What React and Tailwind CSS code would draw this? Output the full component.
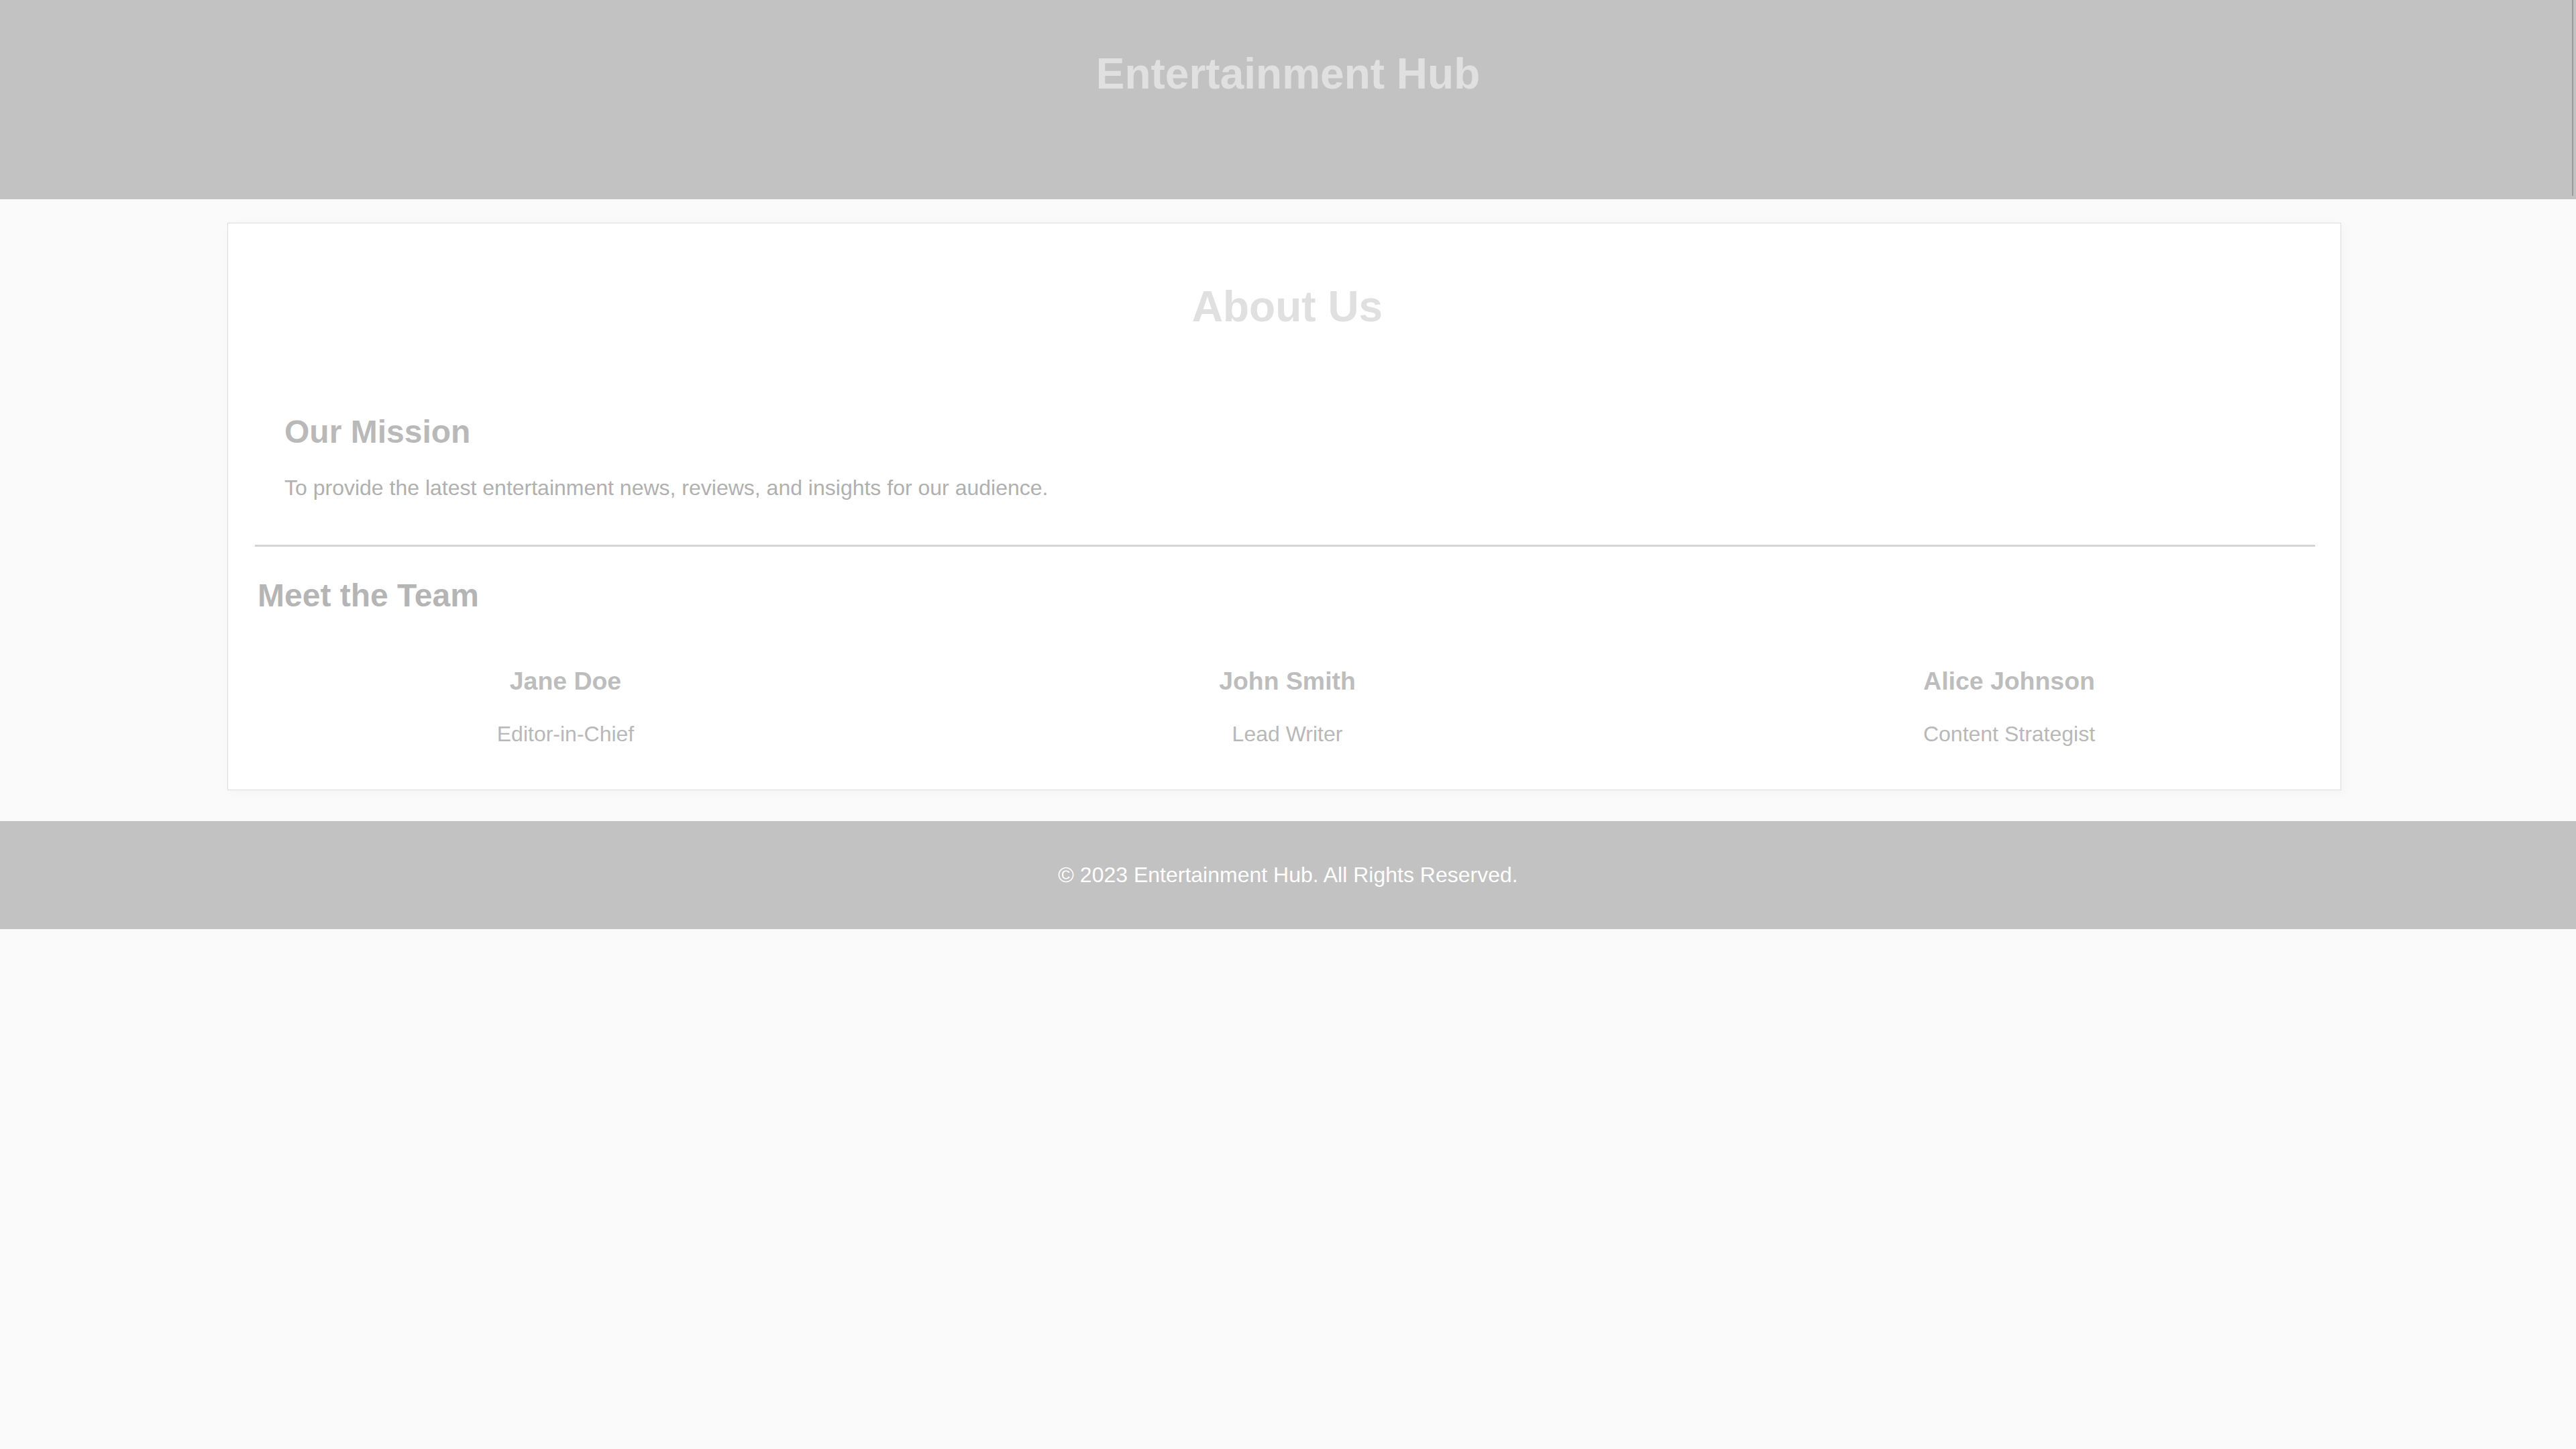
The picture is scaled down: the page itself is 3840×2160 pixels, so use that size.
export default function App() {
  const team = [
    { name: 'Jane Doe', role: 'Editor-in-Chief' },
    { name: 'John Smith', role: 'Lead Writer' },
    { name: 'Alice Johnson', role: 'Content Strategist' },
  ]

  return (
    <div className="min-h-screen bg-[#fafafa] font-['Liberation_Sans',Arial,sans-serif]">
      <header className="relative h-[297px] bg-[#c2c2c2]">
        <h1 className="pt-[73px] text-center text-[64px] leading-[74px] font-bold text-[#e0e0e0]">
          Entertainment Hub
        </h1>
        <div className="absolute right-[4px] top-0 h-[292px] w-[2px] bg-[#9a9a9a]"></div>
      </header>

      <main className="pt-[35px] pb-[46px]">
        <div className="ml-[339px] w-[3151px] border border-[#dcdcdc] bg-white pl-[40px] pr-[31px] pt-[87px] pb-[64px] shadow-[4px_4px_16px_rgba(0,0,0,0.03)]">
          <h1 className="text-center text-[64px] leading-[74px] font-bold text-[#e0e0e0]">About Us</h1>

          <section className="mt-[82px] mr-[7px] border-b-[3px] border-[#d4d4d4] pl-[44px] pr-[40px] pt-[40px] pb-[66px]">
            <h2 className="text-[48px] leading-[55px] font-bold text-[#b9b9b9]">Our Mission</h2>
            <p className="mt-[38px] text-[32px] leading-[37px] text-[#b0b0b0]">
              To provide the latest entertainment news, reviews, and insights for our audience.
            </p>
          </section>

          <section className="pt-[45px]">
            <h2 className="pl-[4px] text-[48px] leading-[55px] font-bold text-[#b5b5b5]">Meet the Team</h2>
            <div className="mt-[79px] grid grid-cols-3 gap-[150px]">
              {team.map((m) => (
                <div key={m.name} className="text-center">
                  <h3 className="text-[37.44px] leading-[43px] font-bold text-[#bdbdbd]">{m.name}</h3>
                  <p className="mt-[39px] text-[32px] leading-[37px] text-[#b8b8b8]">{m.role}</p>
                </div>
              ))}
            </div>
          </section>
        </div>
      </main>

      <footer className="flex h-[161px] items-center justify-center bg-[#c2c2c2]">
        <p className="text-[32px] leading-[37px] text-white">© 2023 Entertainment Hub. All Rights Reserved.</p>
      </footer>
    </div>
  )
}
